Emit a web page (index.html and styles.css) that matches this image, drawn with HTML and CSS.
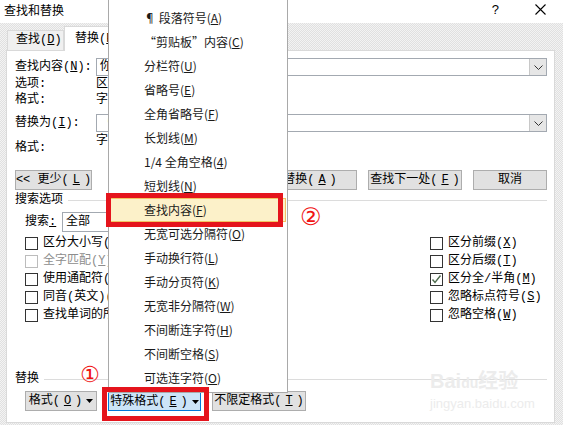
FILE: index.html
```html
<!DOCTYPE html>
<html lang="zh-CN">
<head>
<meta charset="utf-8">
<title>查找和替换</title>
<link rel="stylesheet" href="styles.css">
</head>
<body>
<div class="titlebar">
  <span class="title">查找和替换</span>
  <span class="help">?</span>
  <svg class="close" width="11" height="11" viewBox="0 0 11 11"><path d="M0.5 0.5L10.5 10.5M10.5 0.5L0.5 10.5" stroke="#000" stroke-width="1.1" fill="none"/></svg>
</div>
<div class="frame">
  <div class="tabs">
    <div class="tab">查找(<u>D</u>)</div>
    <div class="tab active">替换(<u>P</u>)</div>
  </div>
  <div class="panel">
    <div class="row find">
      <span class="lbl">查找内容(<u>N</u>):</span>
      <div class="combo"><span class="val">你好</span><span class="arrow"><svg width="9" height="5" viewBox="0 0 9 5"><path d="M0.5 0.5L4.5 4.5L8.5 0.5" stroke="#333" fill="none"/></svg></span></div>
    </div>
    <div class="info"><span class="lbl">选项:</span><span>区分全/半角</span></div>
    <div class="info"><span class="lbl">格式:</span><span>字体: 非倾斜</span></div>
    <div class="row repl">
      <span class="lbl">替换为(<u>I</u>):</span>
      <div class="combo"><span class="val">（你好）</span><span class="arrow"><svg width="9" height="5" viewBox="0 0 9 5"><path d="M0.5 0.5L4.5 4.5L8.5 0.5" stroke="#333" fill="none"/></svg></span></div>
    </div>
    <div class="fmt2"><span class="lbl">格式:</span><span class="v">字体: 倾斜</span></div>
    <div class="btns">
      <div class="btn less">&lt;&lt; 更少(<u>L</u>)</div>
      <div class="spacer"></div>
      <div class="btn w94">替换(<u>A</u>)</div>
      <div class="btn w94">查找下一处(<u>F</u>)</div>
      <div class="btn w74">取消</div>
    </div>
    <div class="grp"><span>搜索选项</span><span class="line"></span></div>
    <div class="search"><span class="slbl">搜索<u>:</u></span><div class="select">全部</div></div>
    <div class="checks">
      <div class="ck"><span class="cb"></span>区分大小写(<u>H</u>)</div>
      <div class="ck dis"><span class="cb"></span>全字匹配(<u>Y</u>)</div>
      <div class="ck"><span class="cb"></span>使用通配符(<u>U</u>)</div>
      <div class="ck"><span class="cb"></span>同音(英文)(<u>K</u>)</div>
      <div class="ck"><span class="cb"></span>查找单词的所有形式(英文)(<u>W</u>)</div>
      <div class="ck"><span class="cb"></span>区分前缀(<u>X</u>)</div>
      <div class="ck"><span class="cb"></span>区分后缀(<u>T</u>)</div>
      <div class="ck"><span class="cb"><svg width="11" height="11" viewBox="0 0 11 11"><path d="M1.5 5.5L4 8.5L9.5 1.5" stroke="#4d6b4d" stroke-width="1.4" fill="none"/></svg></span>区分全/半角(<u>M</u>)</div>
      <div class="ck"><span class="cb"></span>忽略标点符号(<u>S</u>)</div>
      <div class="ck"><span class="cb"></span>忽略空格(<u>W</u>)</div>
    </div>
    <div class="grp grp2"><span>替换</span><span class="line"></span></div>
    <div class="btns2">
      <div class="btn b72">格式(<u>O</u>) <svg width="7" height="4" viewBox="0 0 7 4"><path d="M0 0H7L3.5 4Z" fill="#000"/></svg></div>
      <div class="btn b93 special">特殊格式(<u>E</u>) <svg width="7" height="4" viewBox="0 0 7 4"><path d="M0 0H7L3.5 4Z" fill="#000"/></svg></div>
      <div class="btn b94">不限定格式(<u>T</u>)</div>
    </div>
  </div>
</div>

<div class="menu">
  <div class="mi">¶ 段落符号(<u>A</u>)</div>
  <div class="mi">“剪贴板”内容(<u>C</u>)</div>
  <div class="mi">分栏符(<u>U</u>)</div>
  <div class="mi">省略号(<u>E</u>)</div>
  <div class="mi">全角省略号(<u>F</u>)</div>
  <div class="mi">长划线(<u>M</u>)</div>
  <div class="mi">1/4 全角空格(<u>4</u>)</div>
  <div class="mi">短划线(<u>N</u>)</div>
  <div class="mi hl">查找内容(<u>F</u>)</div>
  <div class="mi">无宽可选分隔符(<u>O</u>)</div>
  <div class="mi">手动换行符(<u>L</u>)</div>
  <div class="mi">手动分页符(<u>K</u>)</div>
  <div class="mi">无宽非分隔符(<u>W</u>)</div>
  <div class="mi">不间断连字符(<u>H</u>)</div>
  <div class="mi">不间断空格(<u>S</u>)</div>
  <div class="mi">可选连字符(<u>O</u>)</div>
</div>

<div class="mark mark1"></div>
<div class="mark mark2"></div>
<span class="num num1">①</span>
<span class="num num2">②</span>
<div class="wm"><span class="wm1">Bai<span class="paw">du</span>经验</span><span class="wm2">jingyan.baidu.com</span></div>
</body>
</html>
```
FILE: styles.css
```css
* { box-sizing: border-box; }
html, body { margin: 0; padding: 0; }
body {
  width: 563px;
  height: 425px;
  overflow: hidden;
  position: relative;
  background: #fff;
  color: #000;
  font-family: "Liberation Mono", "Noto Sans CJK SC", monospace;
  font-size: 12px;
  line-height: 14px;
}
u { text-decoration: underline; text-underline-offset: 1px; }

.titlebar {
  height: 23px;
  display: flex;
  align-items: center;
  padding-left: 4px;
  font-family: "Noto Sans CJK SC", sans-serif;
}
.title { flex: 1; font-size: 12px; margin-top: -3px; }
.help { font-family: "Liberation Sans", sans-serif; font-size: 13px; margin-right: 36px; margin-top: -3px; }
.close { margin-right: 17px; margin-top: -4px; }

.frame {
  height: 402px;
  display: flex;
  flex-direction: column;
  padding: 0 8px 2px 6px;
  background: repeating-conic-gradient(#f3f3f3 0 25%, #e0e0e0 0 50%) 0 0 / 2px 2px;
}
.tabs {
  height: 27px;
  display: flex;
  align-items: flex-end;
  padding-left: 1px;
}
.tab {
  height: 20px;
  width: 57px;
  padding-left: 8px;
  line-height: 19px;
  border: 1px solid #d9d9d9;
  border-bottom: none;
  background: #f0f0f0;
}
.tab.active {
  height: 25px;
  width: 80px;
  margin-bottom: -1px;
  background: #fff;
  line-height: 24px;
  padding-left: 10px;
  position: relative;
  z-index: 1;
}
.panel {
  flex: 1;
  background: #fff;
  border: 1px solid #d9d9d9;
  padding: 0 7px 0 8px;
  display: flex;
  flex-direction: column;
}
.row { display: flex; align-items: center; height: 18px; }
.row.find { margin-top: 7px; }
.row.repl { margin-top: 6px; }
.lbl { width: 81px; flex: none; }
.combo {
  flex: 1;
  height: 18px;
  border: 1px solid #a3a9b1;
  display: flex;
  align-items: center;
}
.combo .val { flex: 1; padding-left: 3px; }
.combo .arrow {
  width: 17px;
  height: 16px;
  display: flex;
  align-items: center;
  justify-content: center;
  background: #e6e6e6;
  border-left: 1px solid #c8c8c8;
}
.info { display: flex; height: 16px; align-items: center; }
.fmt2 { display: flex; height: 23px; }
.fmt2 .lbl { padding-top: 9px; }
.fmt2 .v { padding-top: 2px; }

.btns { display: flex; margin-top: 15px; height: 20px; gap: 11px; }
.spacer { flex: 1; }
.btn {
  height: 20px;
  background: #e1e1e1;
  border: 1px solid #adadad;
  display: flex;
  align-items: center;
  justify-content: center;
  gap: 4px;
  white-space: nowrap;
}
.btn.less { width: 77px; }
.w94 { width: 94px; }
.w74 { width: 74px; }

.grp { display: flex; align-items: center; margin-top: 3px; height: 14px; }
.grp .line { flex: 1; border-top: 1px solid #dcdcdc; margin-left: 5px; margin-top: 1px; }
.grp2 { margin-top: 48px; }

.search { display: flex; align-items: center; margin-top: 5px; height: 20px; padding-left: 10px; }
.slbl { width: 37px; }
.select { width: 160px; height: 20px; border: 1px solid #a3a9b1; padding-left: 3px; line-height: 18px; }

.checks {
  margin-top: 2px;
  display: grid;
  grid-template-columns: 415px 1fr;
  grid-template-rows: repeat(5, 18px);
  grid-auto-flow: column;
}
.ck { display: flex; align-items: center; white-space: nowrap; }
.checks .ck:nth-child(-n+5) { padding-left: 10px; }
.cb {
  width: 13px;
  height: 13px;
  border: 1px solid #333;
  background: #fff;
  margin-right: 5px;
  flex: none;
  display: flex;
  align-items: center;
  justify-content: center;
}
.ck.dis { color: #8d8d8d; }
.ck.dis .cb { border-color: #bcbcbc; }

.btns2 { display: flex; margin-top: 5px; padding-left: 10px; gap: 11px; }
.b72 { width: 72px; }
.b93 { width: 93px; margin-top: 1px; height: 19px; }
.b94 { width: 94px; }
.special { background: #cce4f7; border-color: #0078d7; }

.menu {
  position: absolute;
  left: 108px;
  top: -2px;
  width: 180px;
  height: 395px;
  background: #fff;
  border: 1px solid #a9a9a9;
  padding: 7px 1px 0 0;
  font-family: "Noto Sans CJK SC", sans-serif;
  font-size: 12px;
  color: #1a1a1a;
  z-index: 5;
}
.mi { height: 24px; line-height: 24px; padding-left: 35px; white-space: nowrap; }
.mi.hl {
  background: #fcf1c9;
  border: 1px solid #f2c464;
  line-height: 22px;
  padding-left: 34px;
}

.mark {
  position: absolute;
  border: 5px solid #e5141c;
  z-index: 6;
}
.mark1 { left: 106px; top: 193px; width: 177px; height: 34px; }
.mark2 { left: 102px; top: 387px; width: 107px; height: 34px; }

.num {
  position: absolute;
  color: #f01414;
  font-family: "DejaVu Sans", sans-serif;
  line-height: 1;
  z-index: 6;
}
.num1 { left: 80px; top: 364px; font-size: 22px; }
.num2 { left: 300px; top: 205px; font-size: 24px; }

.wm {
  position: absolute;
  left: 430px;
  top: 368px;
  display: flex;
  flex-direction: column;
  color: #ececec;
  font-family: "Liberation Sans", "Noto Sans CJK SC", sans-serif;
  z-index: 4;
}
.wm1 { font-size: 20px; line-height: 26px; font-weight: bold; }
.paw { font-size: 14px; }
.wm2 { font-size: 13px; line-height: 16px; }
```
